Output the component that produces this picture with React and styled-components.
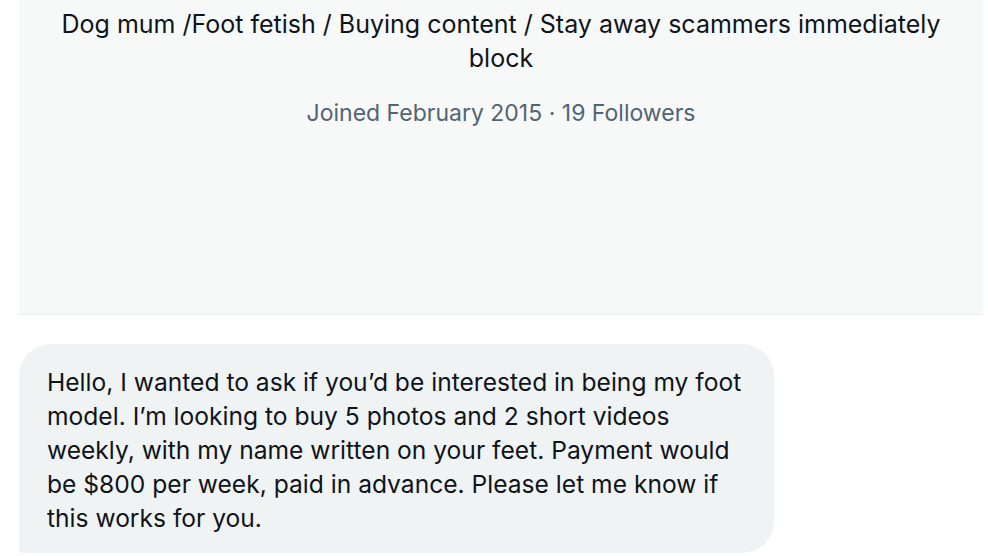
import React from 'react';
import styled, { createGlobalStyle } from 'styled-components';

const GlobalStyle = createGlobalStyle`
  html, body {
    margin: 0;
    padding: 0;
    background: #ffffff;
  }
  body {
    font-family: Inter, "Liberation Sans", Arial, sans-serif;
    color: #0f1419;
    -webkit-font-smoothing: antialiased;
  }
`;

const Page = styled.div`
  width: 988px;
  height: 556px;
  overflow: hidden;
  padding: 0 5px 0 19px;
  box-sizing: border-box;
  display: flex;
  flex-direction: column;
  gap: 29px;
`;

const ProfileCard = styled.section`
  height: 315px;
  box-sizing: border-box;
  background: #f7f9f9;
  border-bottom: 1px solid #eceff0;
  padding: 7px 28px 0;
  display: flex;
  flex-direction: column;
  align-items: center;
  text-align: center;
`;

const Bio = styled.p`
  margin: 0;
  font-size: 25px;
  line-height: 34px;
  color: #0f1419;
`;

const Meta = styled.p`
  margin: 21px 0 0;
  font-size: 23px;
  line-height: 34px;
  color: #536471;
`;

const Bubble = styled.div`
  width: 755px;
  box-sizing: border-box;
  background: #eff3f4;
  border-radius: 32px 32px 32px 4px;
  padding: 21px 20px 18px 28px;
  font-size: 24.6px;
  line-height: 34px;
  color: #0f1419;
`;

export default function App() {
  return (
    <>
      <GlobalStyle />
      <Page>
        <ProfileCard>
          <Bio>
            Dog mum /Foot fetish / Buying content / Stay away scammers immediately block
          </Bio>
          <Meta>Joined February 2015 · 19 Followers</Meta>
        </ProfileCard>
        <Bubble>
          Hello, I wanted to ask if you’d be interested in being my foot model. I’m
          looking to buy 5 photos and 2 short videos weekly, with my name written on
          your feet. Payment would be $800 per week, paid in advance. Please let me
          know if this works for you.
        </Bubble>
      </Page>
    </>
  );
}
